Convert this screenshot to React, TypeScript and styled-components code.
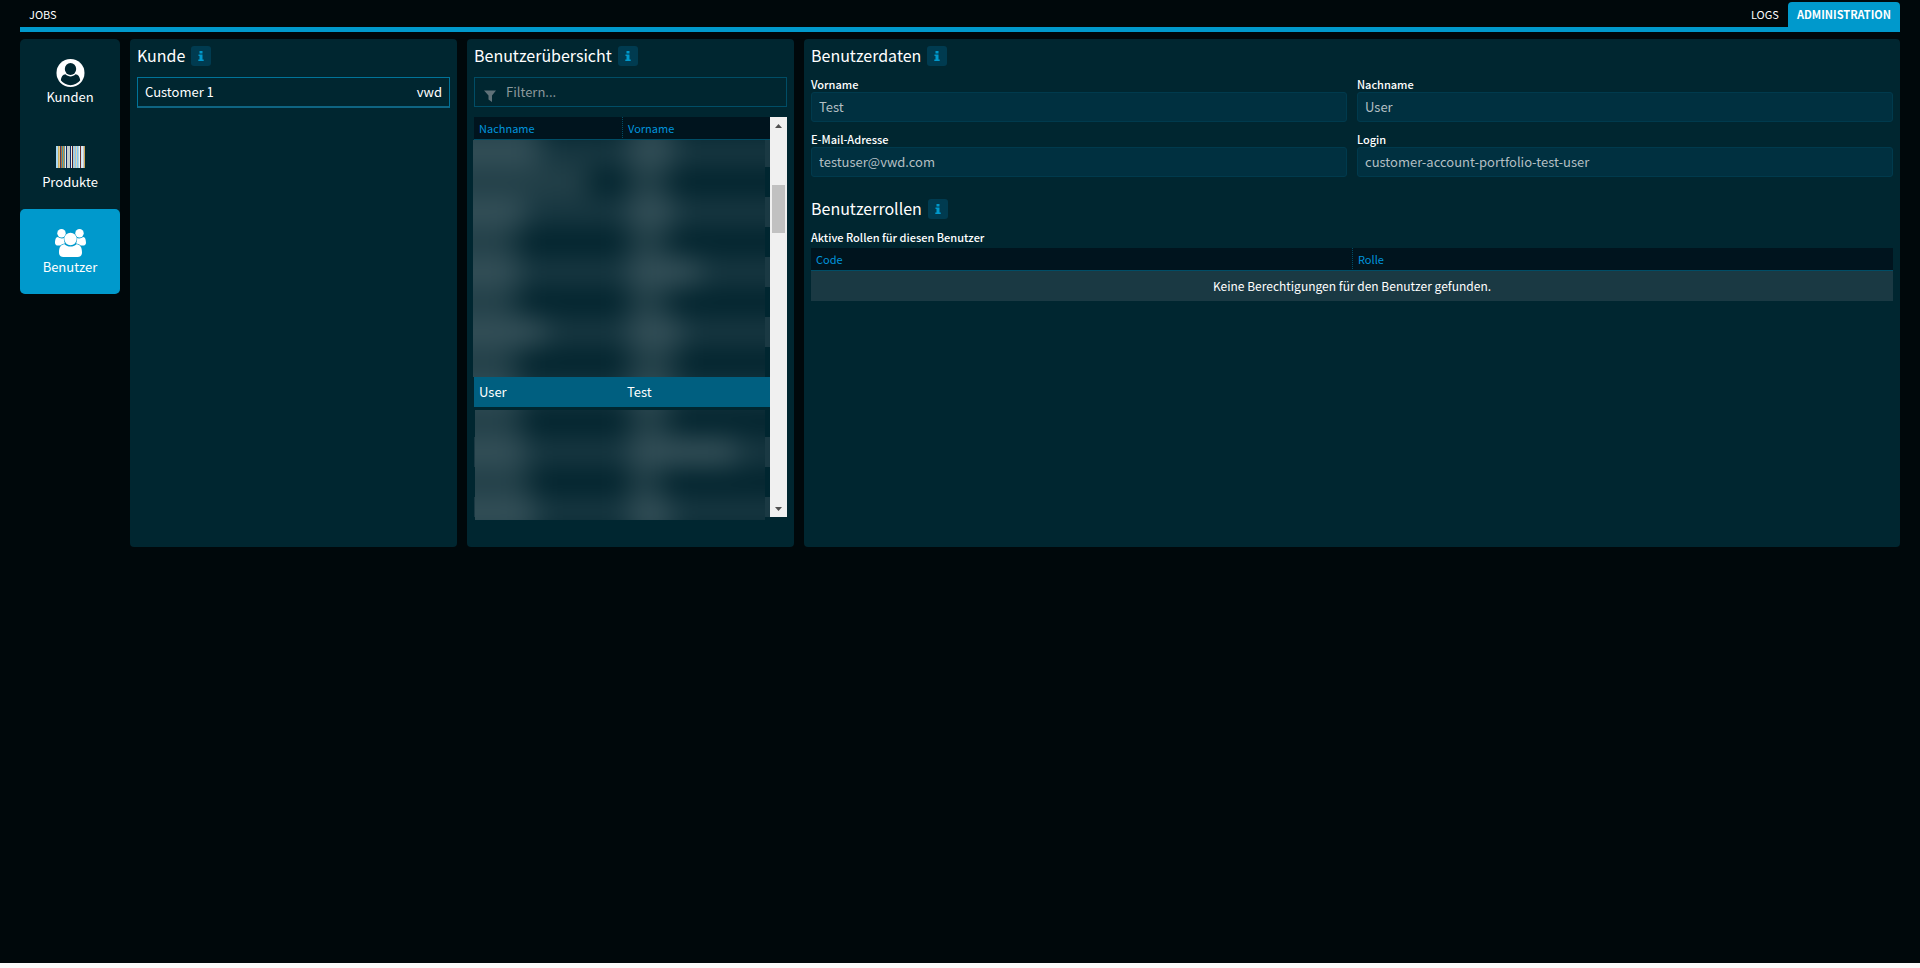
import React from "react";
import styled, { createGlobalStyle, css } from "styled-components";

const c = {
  page: "#00080b",
  panel: "#002630",
  accent: "#0099cc",
  head: "#00141e",
  headText: "#0094dc",
  stripe: "#1a3943",
  line: "#004d66",
};

const GlobalStyle = createGlobalStyle`
  *, *::before, *::after { box-sizing: border-box; }
  body {
    margin: 0;
    background: #fafafa;
    color: #fff;
    font-family: "Noto Sans CJK SC", "Noto Sans", sans-serif;
    font-size: 13px;
    line-height: 20px;
  }
  button, input { font: inherit; color: inherit; margin: 0; }
`;

const Page = styled.div`
  min-height: calc(100vh - 5px);
  padding: 2px 20px 20px;
  background: ${c.page};
`;

const TopNav = styled.nav`
  display: flex;
  height: 30px;
  border-bottom: 5px solid ${c.accent};
`;

const NavLink = styled.a<{ $active?: boolean }>`
  padding: 2px 9px;
  color: #fff;
  font-size: 11px;
  text-decoration: none;
  text-transform: uppercase;
  ${(p) =>
    p.$active &&
    css`
      background: ${c.accent};
      border-radius: 4px 4px 0 0;
      font-weight: 700;
    `}
`;

const Spacer = styled.div`
  flex: 1;
`;

const Layout = styled.main`
  display: grid;
  grid-template-columns: 100px 327fr 327fr 1096fr;
  gap: 10px;
  margin-top: 7px;
  align-items: stretch;
`;

const SideNav = styled.nav`
  align-self: start;
  background: ${c.panel};
  border-radius: 5px;
`;

const SideButton = styled.button<{ $active?: boolean }>`
  display: flex;
  flex-direction: column;
  align-items: center;
  width: 100%;
  height: 85px;
  padding: 20px 0 0;
  border: 0;
  border-radius: 5px;
  background: ${(p) => (p.$active ? c.accent : "transparent")};
  cursor: pointer;
  svg { display: block; height: 28px; }
`;

const Panel = styled.section`
  min-height: 508px;
  padding: 7px;
  background: ${c.panel};
  border-radius: 4px;
`;

const Title = styled.h2`
  display: flex;
  align-items: center;
  gap: 6px;
  height: 20px;
  margin: 0;
  font-size: 16px;
  font-weight: 400;
`;

const TitleText = styled.span`
  padding-bottom: 2px;
`;

const InfoButton = styled.button`
  display: grid;
  place-items: center;
  width: 20px;
  height: 20px;
  padding: 0;
  border: 0;
  border-radius: 3px;
  background: #003b50;
  cursor: pointer;
`;

const Customer = styled.button`
  display: flex;
  justify-content: space-between;
  align-items: center;
  width: 100%;
  height: 31px;
  margin-top: 11px;
  padding: 0 7px;
  background: none;
  border: 1px solid #007399;
  border-bottom: 2px solid #0e6482;
`;

const Filter = styled.label`
  display: flex;
  align-items: center;
  height: 30px;
  margin-top: 11px;
  padding: 0 9px;
  border: 1px solid ${c.line};
  svg { margin-top: 8px; }
`;

const FilterInput = styled.input`
  flex: 1;
  min-width: 0;
  padding: 0 0 0 10px;
  border: 0;
  background: none;
  outline: none;
  &::placeholder { color: #8c989c; opacity: 1; }
`;

const ListArea = styled.div`
  position: relative;
  display: flex;
  height: 400px;
  margin-top: 10px;
`;

const ListView = styled.div`
  flex: 1;
  overflow: hidden;
`;

const Table = styled.table`
  width: 100%;
  table-layout: fixed;
  border-collapse: separate;
  border-spacing: 0;
  th {
    height: 23px;
    padding: 0 5px;
    background: ${c.head};
    border-bottom: 1px solid ${c.line};
    color: ${c.headText};
    font-size: 11px;
    font-weight: 400;
    text-align: left;
  }
  th + th { border-left: 1px dotted ${c.line}; }
`;

const Row = styled.tr<{ $tone: "light" | "dark" | "selected"; $first?: boolean }>`
  td {
    height: ${(p) => (p.$first ? 27 : 30)}px;
    padding: 0 5px;
    background: ${(p) => (p.$tone === "light" ? c.stripe : p.$tone === "selected" ? "#005f80" : "transparent")};
  }
`;

const Redaction = styled.div<{ $top: number; $height: number; $left: number }>`
  position: absolute;
  top: ${(p) => p.$top}px;
  left: ${(p) => p.$left}px;
  right: 22px;
  height: ${(p) => p.$height}px;
  overflow: hidden;
  background: ${c.panel};
`;

const Smear = styled.div`
  margin: -33px -40px;
  filter: blur(14px);
`;

const SmearRow = styled.div<{ $light: boolean }>`
  display: grid;
  grid-template-columns: 1fr 1fr;
  align-items: center;
  height: 30px;
  padding: 0 15px 0 10px;
  background: ${(p) => (p.$light ? "#1a3943" : "#00222c")};
`;

const Word = styled.span<{ $w: number; $indent?: number }>`
  width: ${(p) => p.$w}px;
  height: 22px;
  margin-left: ${(p) => p.$indent ?? 0}px;
  background: rgba(255, 255, 255, 0.17);
`;

const ScrollBar = styled.div`
  display: flex;
  flex-direction: column;
  align-items: center;
  width: 17px;
  background: #f0f0f0;
`;

const ScrollButton = styled.button`
  display: grid;
  place-items: center;
  width: 17px;
  height: 17px;
  padding: 0;
  border: 0;
  background: none;
`;

const ScrollTrack = styled.div`
  flex: 1;
  padding-top: 51px;
`;

const ScrollThumb = styled.div`
  width: 13px;
  height: 48px;
  background: #c1c1c1;
`;

const Form = styled.form`
  display: grid;
  grid-template-columns: 1fr 1fr;
  gap: 10px;
  margin: 11px 0 22px;
`;

const Field = styled.label`
  display: flex;
  flex-direction: column;
  font-size: 11px;
  font-weight: 500;
  line-height: 15px;
`;

const TextBox = styled.input`
  height: 30px;
  padding: 0 7px 2px;
  border: 1px solid #003a4d;
  border-radius: 3px;
  background: #003040;
  color: #b3bfc3;
  font-size: 13px;
  font-weight: 400;
`;

const Subtitle = styled.h3`
  margin: 8px 0 1px;
  font-size: 11px;
  font-weight: 500;
  line-height: 20px;
`;

const Empty = styled.td`
  height: 30px;
  padding: 0;
  background: ${c.stripe};
  font-size: 12px;
  text-align: center;
`;

const InfoIcon = () => (
  <svg width="6" height="12" viewBox="0 0 6 12" fill={c.accent} aria-hidden="true">
    <path d="M1.5 1h3v2.4h-3zM.5 4.6h4v4.9h1.2V11H.3V9.500h1.200V6.100H.500z" />
  </svg>
);

const UserIcon = () => (
  <svg width="29" height="28" viewBox="0 0 28 28" aria-hidden="true">
    <circle cx="14" cy="14" r="14" fill="#fff" />
    <ellipse cx="14" cy="10" rx="5.700" ry="6" fill={c.panel} />
    <path fill={c.panel} d="M4.300 21.200c.4-3.500 1.900-5.700 4.700-6 1.400 1.400 3.100 2.200 5 2.200s3.600-.8 5-2.200c2.800.3 4.300 2.500 4.700 6A12 12 0 0 1 4.300 21.200z" />
  </svg>
);

const bars = ["#a9d9f5", "#a9d9f5", "#c9b060", "#e8c890", "#4a3a5b", "#b8733a", "#3f9bab", "#c98a3e", "#5f9aa0", "#f5e8d8", "#0a2a6b", "#c4ccc8", "#c4ccc8", "#c4ccc8", "#0a2a70", "#f8f0d8", "#4a2030", "#8fd0f5", "#d0c8b0", "#80c8f5", "#e0d0b0", "#80c8f5", "#b8d0d8", "#e8f4f4", "#6a2a28", "#c9e8f8", "#e8ece8", "#b8c4dc", "#d0a850"];

const BarcodeIcon = () => (
  <svg width="29" height="28" viewBox="0 0 29 28" shapeRendering="crispEdges" aria-hidden="true">
    {bars.map((fill, i) => (
      <rect key={i} x={i} y="2" width="1" height="22" fill={fill} />
    ))}
  </svg>
);

const UsersIcon = () => (
  <svg width="31" height="28" viewBox="0 0 31 28" aria-hidden="true">
    <g fill="#fff">
      <circle cx="6.500" cy="4.200" r="4.200" />
      <circle cx="24.500" cy="4.200" r="4.200" />
      <path d="M2.800 8c2 1.600 4.800 1.800 6.800.8v6.700c-1.700 0-3.300.2-4.300 1H3C1.200 16.500 0 15.600 0 13.700 0 11 .8 8 2.800 8zM28.200 8c-2 1.600-4.800 1.800-6.800.8v6.700c1.700 0 3.300.2 4.300 1H28c1.800 0 3-.9 3-2.800C31 11 30.200 8 28.200 8z" />
    </g>
    <g fill="#fff" stroke={c.accent} strokeWidth="1" paintOrder="stroke">
      <path d="M9.500 15.200c1.700 1.400 3.700 2.300 6 2.300s4.300-.9 6-2.300c4 0 5.500 3.600 5.500 8.300 0 3-1.700 4.500-4.300 4.500H8.300C5.700 28 4 26.500 4 23.500c0-4.700 1.500-8.300 5.500-8.300z" />
      <circle cx="15.500" cy="10" r="6.200" />
    </g>
  </svg>
);

const FunnelIcon = () => (
  <svg width="12" height="12" viewBox="0 0 12 12" fill="#5f7178" aria-hidden="true">
    <path d="M0 .5h12L8 5.500V12L4.500 9.500v-4z" />
  </svg>
);

const Arrow = ({ down }: { down?: boolean }) => (
  <svg width="7" height="4" viewBox="0 0 7 4" fill="#505050" aria-hidden="true">
    <path d={down ? "M0 0h7L3.500 4z" : "M0 4h7L3.500 0z"} />
  </svg>
);

const Heading = ({ children }: { children: string }) => (
  <Title>
    <TitleText>{children}</TitleText>
    <InfoButton type="button" aria-label={`Info: ${children}`}>
      <InfoIcon />
    </InfoButton>
  </Title>
);

const smearsAbove = [[60, 44], [60, 44], [110, 38], [46, 44], [38, 38], [40, 70], [38, 38], [66, 52], [38, 46], [38, 44], [38, 44]];
const smearsBelow = [[38, 38], [40, 38], [44, 106], [48, 30], [54, 40], [54, 42]];

const SmearRows = ({ rows, offset }: { rows: number[][]; offset: number }) => (
  <Smear>
    {rows.map(([a, b], i) => (
      <SmearRow key={i} $light={(i + offset) % 2 === 1}>
        <Word $w={a + 36} />
        <Word $w={b} $indent={12} />
      </SmearRow>
    ))}
  </Smear>
);

const selectedRow = 8;
const userRows = Array.from({ length: 13 }, (_, i) => i);
const toneOf = (i: number) => (i === selectedRow ? "selected" : i % 2 === 0 ? "light" : "dark");

const fields = [
  ["Vorname", "Test"],
  ["Nachname", "User"],
  ["E-Mail-Adresse", "testuser@vwd.com"],
  ["Login", "customer-account-portfolio-test-user"],
];

export default function App() {
  return (
    <>
      <GlobalStyle />
      <Page>
        <TopNav>
          <NavLink href="#jobs">Jobs</NavLink>
          <Spacer />
          <NavLink href="#logs">Logs</NavLink>
          <NavLink href="#administration" $active>Administration</NavLink>
        </TopNav>
        <Layout>
          <SideNav>
            <SideButton type="button"><UserIcon />Kunden</SideButton>
            <SideButton type="button"><BarcodeIcon />Produkte</SideButton>
            <SideButton type="button" $active><UsersIcon />Benutzer</SideButton>
          </SideNav>
          <Panel>
            <Heading>Kunde</Heading>
            <Customer type="button"><span>Customer 1</span><span>vwd</span></Customer>
          </Panel>
          <Panel>
            <Heading>Benutzerübersicht</Heading>
            <Filter>
              <FunnelIcon />
              <FilterInput type="text" placeholder="Filtern..." aria-label="Filtern" />
            </Filter>
            <ListArea>
              <ListView>
                <Table>
                  <thead><tr><th>Nachname</th><th>Vorname</th></tr></thead>
                  <tbody>
                    {userRows.map((i) => (
                      <Row key={i} $first={i === 0} $tone={toneOf(i)}>
                        <td>{i === selectedRow && "User"}</td>
                        <td>{i === selectedRow && "Test"}</td>
                      </Row>
                    ))}
                  </tbody>
                </Table>
              </ListView>
              <ScrollBar>
                <ScrollButton type="button" aria-label="Nach oben"><Arrow /></ScrollButton>
                <ScrollTrack><ScrollThumb /></ScrollTrack>
                <ScrollButton type="button" aria-label="Nach unten"><Arrow down /></ScrollButton>
              </ScrollBar>
              <Redaction $top={23} $left={-1} $height={237}>
                <SmearRows rows={smearsAbove} offset={0} />
              </Redaction>
              <Redaction $top={293} $left={1} $height={110}>
                <SmearRows rows={smearsBelow} offset={1} />
              </Redaction>
            </ListArea>
          </Panel>
          <Panel>
            <Heading>Benutzerdaten</Heading>
            <Form>
              {fields.map(([label, value]) => (
                <Field key={label}>
                  {label}
                  <TextBox type="text" readOnly value={value} />
                </Field>
              ))}
            </Form>
            <Heading>Benutzerrollen</Heading>
            <Subtitle>Aktive Rollen für diesen Benutzer</Subtitle>
            <Table>
              <thead><tr><th>Code</th><th>Rolle</th></tr></thead>
              <tbody><tr><Empty colSpan={2}>Keine Berechtigungen für den Benutzer gefunden.</Empty></tr></tbody>
            </Table>
          </Panel>
        </Layout>
      </Page>
    </>
  );
}
